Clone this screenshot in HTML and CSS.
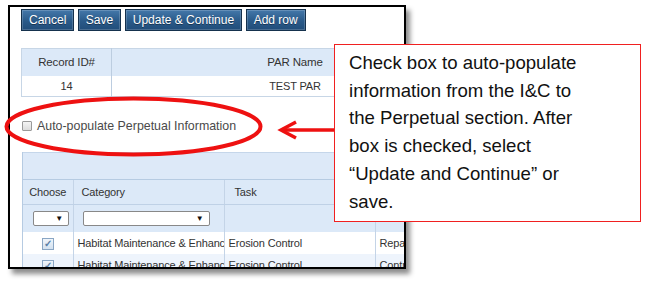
FILE: index.html
```html
<!DOCTYPE html>
<html lang="en">
  <head>
    <meta charset="UTF-8" />
    <title>Perpetual Information</title>
    <link rel="stylesheet" href="styles.css">
  </head>
  <body>
    <div class="shot">
      <div class="toolbar">
        <button class="btn">Cancel</button>
        <button class="btn">Save</button>
        <button class="btn">Update &amp; Continue</button>
        <button class="btn">Add row</button>
      </div>

      <table class="grid rec">
        <tr class="head">
          <th class="c-id">Record ID#</th>
          <th class="c-name">PAR Name</th>
        </tr>
        <tr>
          <td class="c-id">14</td>
          <td class="c-name">TEST PAR</td>
        </tr>
      </table>

      <label class="auto"><span class="box"></span>Auto-populate Perpetual Information</label>

      <div class="panel">
        <div class="panel-head"></div>
        <table class="grid tasks">
          <tr class="head">
            <th class="c-choose">Choose</th>
            <th class="c-cat">Category</th>
            <th class="c-task">Task</th>
            <th class="c-more"></th>
          </tr>
          <tr class="head filters">
            <td class="c-choose"><span class="sel small">&#9660;</span></td>
            <td class="c-cat"><span class="sel wide">&#9660;</span></td>
            <td class="c-task"></td>
            <td class="c-more"></td>
          </tr>
          <tr>
            <td class="c-choose"><span class="check">&#10003;</span></td>
            <td class="c-cat">Habitat Maintenance &amp; Enhancement</td>
            <td class="c-task">Erosion Control</td>
            <td class="c-more">Repair</td>
          </tr>
          <tr class="alt">
            <td class="c-choose"><span class="check">&#10003;</span></td>
            <td class="c-cat">Habitat Maintenance &amp; Enhancement</td>
            <td class="c-task">Erosion Control</td>
            <td class="c-more">Control</td>
          </tr>
        </table>
      </div>
    </div>

    <svg class="marks" width="647" height="282" viewBox="0 0 647 282">
      <ellipse cx="133.5" cy="126.5" rx="127" ry="28" fill="none" stroke="#ee1111" stroke-width="4"/>
      <path d="M281 130 H334" stroke="#ee1111" stroke-width="3.5" fill="none"/>
      <path d="M296 122 L281 130 L296 138" stroke="#ee1111" stroke-width="3.5" fill="none" stroke-linejoin="miter"/>
    </svg>

    <div class="callout">
      Check box to auto-populate<br>
      information from the I&amp;C to<br>
      the Perpetual section. After<br>
      box is checked, select<br>
      &ldquo;Update and Continue&rdquo; or<br>
      save.
    </div>
  </body>
</html>
```

FILE: styles.css
```css
body {
  margin: 0;
  width: 647px;
  height: 282px;
  background: white;
  position: relative;
  overflow: hidden;
  font-family: "Liberation Sans", Arial, sans-serif;
}

.shot {
  margin: 5px 0 0 8px;
  width: 394px;
  height: 260px;
  border: 2px solid #000;
  background: white;
  overflow: hidden;
  box-shadow: 4px 5px 5px rgba(0, 0, 0, 0.45);
  font-size: 11px;
  color: #333;
}

.toolbar {
  display: flex;
  gap: 3.5px;
  padding: 2px 0 0 11px;
}

.btn {
  height: 22px;
  padding: 0 7px;
  font-family: "Liberation Sans", Arial, sans-serif;
  font-size: 12px;
  color: white;
  border: 1px solid #15314d;
  border-radius: 0;
  background: linear-gradient(#4478aa, #2a5a89 55%, #214d7a);
  box-shadow: inset 0 0 0 1px rgba(255, 255, 255, 0.18);
  text-shadow: 0 1px 0 rgba(0, 0, 0, 0.4);
}

.grid {
  border-collapse: collapse;
  table-layout: fixed;
}

.grid th,
.grid td {
  box-sizing: border-box;
  padding: 0 4px;
  white-space: nowrap;
  overflow: hidden;
  font-weight: normal;
  letter-spacing: -0.15px;
}

.rec {
  margin: 17px 0 0 11px;
  width: 458px;
  border: 1px solid #c7d6e6;
}

.rec .head {
  height: 27px;
  background: #dce9f8;
  font-size: 11.5px;
}

.rec tr {
  height: 21px;
}

.rec .c-id {
  width: 90px;
  text-align: center;
  border-right: 1px solid #bccde0;
}

.rec .c-name {
  text-align: center;
}

.auto {
  display: flex;
  align-items: center;
  gap: 5px;
  margin: 22px 0 0 12px;
  color: #4a4a4a;
  font-size: 12.4px;
}

.box {
  width: 8px;
  height: 8px;
  border: 1px solid #9a9a9a;
  background: linear-gradient(#f4f4f4, #dcdcdc);
  border-radius: 1px;
}

.panel {
  margin: 19px 0 0 12px;
  width: 460px;
  border-left: 1px solid #b6cbe2;
}

.panel-head {
  height: 26px;
  background: #dde9f8;
  border-top: 1px solid #c5d6ea;
  border-bottom: 1px solid #b6cbe2;
}

.tasks {
  width: 460px;
}

.tasks .head {
  height: 24px;
  background: #dce9f8;
}

.tasks .head th {
  text-align: left;
  padding-left: 8px;
  border-bottom: 1px solid #bfd1e6;
}

.tasks .filters {
  height: 28px;
}

.tasks tr {
  height: 22px;
}

.tasks .alt {
  background: #eef4fc;
}

.tasks .c-choose {
  width: 50px;
  text-align: center;
  border-right: 1px solid #c4d4e7;
}

.tasks .c-cat {
  width: 151px;
  border-right: 1px solid #c4d4e7;
  text-overflow: clip;
}

.tasks .c-task {
  width: 151px;
  border-right: 1px solid #c4d4e7;
}

.tasks th.c-choose {
  text-align: center;
  padding: 0 2px;
}

.tasks th.c-task {
  padding-left: 10px;
}

.tasks .filters td.c-choose {
  text-align: left;
  padding-left: 10px;
}

.sel {
  display: inline-block;
  box-sizing: border-box;
  height: 15px;
  border: 1px solid #888;
  border-radius: 2px;
  background: white;
  font-size: 8px;
  line-height: 13px;
  text-align: right;
  padding-right: 5px;
  color: #111;
  vertical-align: middle;
}

.sel.small {
  width: 36px;
}

.sel.wide {
  width: 127px;
  margin-left: 5px;
}

.check {
  display: inline-block;
  width: 10px;
  height: 10px;
  border: 1px solid #8aa6c4;
  background: linear-gradient(#f0f5fb, #d3e1ef);
  color: #5a7fa6;
  font-size: 10px;
  line-height: 10px;
  text-align: center;
  font-weight: bold;
  vertical-align: middle;
}

.marks {
  position: absolute;
  left: 0;
  top: 0;
  pointer-events: none;
}

.callout {
  position: absolute;
  left: 334px;
  top: 44px;
  width: 291px;
  height: 172px;
  padding: 4px 0 0 14px;
  box-sizing: content-box;
  border: 1px solid #f02020;
  background: white;
  font-family: "Liberation Sans", Arial, sans-serif;
  font-size: 18.6px;
  line-height: 27.7px;
  color: #111;
}
```
